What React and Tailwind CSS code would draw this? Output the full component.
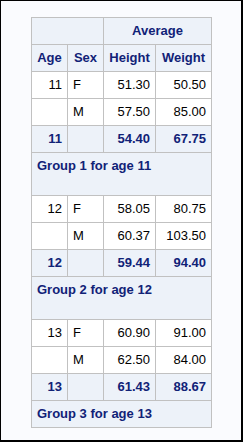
import React from "react";

const groups = [
  {
    age: "11",
    rows: [
      ["F", "51.30", "50.50"],
      ["M", "57.50", "85.00"],
    ],
    sum: ["54.40", "67.75"],
    label: "Group 1 for age 11",
    blank: true,
  },
  {
    age: "12",
    rows: [
      ["F", "58.05", "80.75"],
      ["M", "60.37", "103.50"],
    ],
    sum: ["59.44", "94.40"],
    label: "Group 2 for age 12",
    blank: true,
  },
  {
    age: "13",
    rows: [
      ["F", "60.90", "91.00"],
      ["M", "62.50", "84.00"],
    ],
    sum: ["61.43", "88.67"],
    label: "Group 3 for age 13",
    blank: false,
  },
];

const cell = "border-r border-b border-[#c1c1c1] px-[5px] py-[5px] leading-[16px] whitespace-nowrap";
const hdr = cell + " bg-[#edf2f9] text-[#112277] font-bold";
const dat = cell + " bg-white text-black";

export default function App() {
  return (
    <div
      className="w-[243px] h-[442px] bg-[#fafbfe] border-l border-t border-r-2 border-b-2 border-black overflow-hidden"
      style={{ fontFamily: '"Liberation Sans", Arial, sans-serif' }}
    >
      <table className="ml-[30px] mt-[16px] border-separate border-spacing-0 border-l border-t border-[#c1c1c1] text-[13px] table-fixed w-[181px]">
        <colgroup>
          <col className="w-[36px]" />
          <col className="w-[36px]" />
          <col className="w-[52px]" />
          <col className="w-[56px]" />
        </colgroup>
        <thead>
          <tr>
            <th colSpan={2} className={hdr}>&nbsp;</th>
            <th colSpan={2} className={hdr + " text-center"}>Average</th>
          </tr>
          <tr>
            <th className={hdr + " text-center"}>Age</th>
            <th className={hdr + " text-center"}>Sex</th>
            <th className={hdr + " text-center"}>Height</th>
            <th className={hdr + " text-center"}>Weight</th>
          </tr>
        </thead>
        <tbody>
          {groups.map((g) => (
            <React.Fragment key={g.age}>
              {g.rows.map((r, i) => (
                <tr key={i}>
                  <td className={dat + " text-right"}>{i === 0 ? g.age : ""}</td>
                  <td className={dat + " text-left"}>{r[0]}</td>
                  <td className={dat + " text-right"}>{r[1]}</td>
                  <td className={dat + " text-right"}>{r[2]}</td>
                </tr>
              ))}
              <tr>
                <td className={hdr + " text-right"}>{g.age}</td>
                <td className={hdr}></td>
                <td className={hdr + " text-right"}>{g.sum[0]}</td>
                <td className={hdr + " text-right"}>{g.sum[1]}</td>
              </tr>
              <tr>
                <td colSpan={4} className={hdr + " text-left"}>
                  {g.label}
                  {g.blank ? (
                    <>
                      <br />
                      &nbsp;
                    </>
                  ) : null}
                </td>
              </tr>
            </React.Fragment>
          ))}
        </tbody>
      </table>
    </div>
  );
}
